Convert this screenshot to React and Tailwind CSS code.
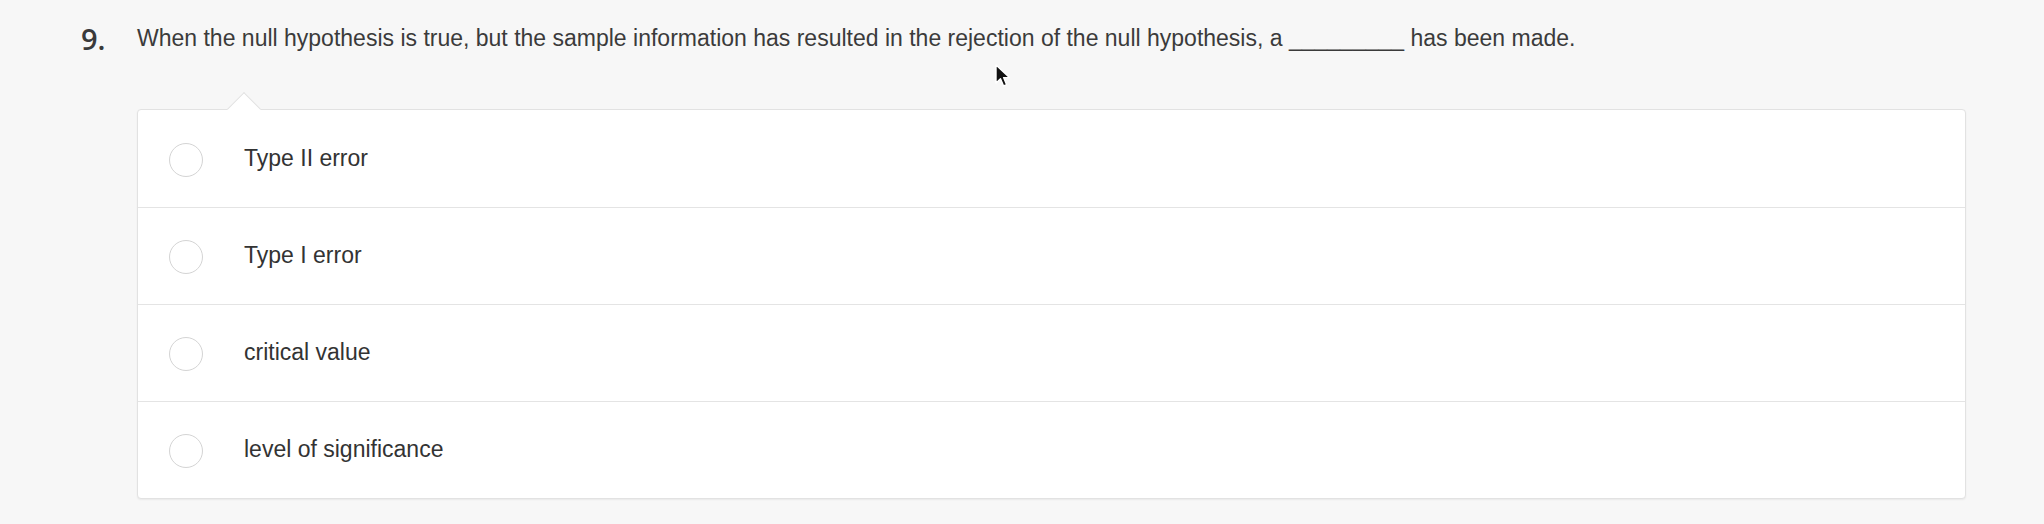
import React from 'react';

const options = ['Type II error', 'Type I error', 'critical value', 'level of significance'];

// mouse pointer captured in the screenshot
const Cursor = () => (
  <svg className="absolute left-[994px] top-[63px]" width="18" height="26" viewBox="0 0 18 26">
    <path d="M2 2 L2 20 L6.5 15.8 L9.6 23 L12.6 21.7 L9.6 14.6 L15.4 14.6 Z" fill="#111" stroke="#fff" strokeWidth="1.4" strokeLinejoin="round" />
  </svg>
);

const Radio = () => (
  <span className="block w-[34px] h-[34px] rounded-full border-[1.5px] border-[#d4d4d4] bg-white shrink-0" />
);

export default function App() {
  return (
    <div className="relative h-[524px] bg-[#f7f7f7] font-['Liberation_Sans',Arial,sans-serif] text-[#333]">
      <div className="flex items-start pt-[21px] pl-[81px]">
        <span className="w-[56px] pt-[3px] leading-none font-['Open_Sans',sans-serif] font-semibold text-[29px] text-[#3a3a3a]">9.</span>
        <p className="text-[23px] text-[#3b3b3b]">
          When the null hypothesis is true, but the sample information has resulted in the rejection of the null hypothesis, a _________ has been made.
        </p>
      </div>

      <div className="relative ml-[137px] mt-[53px] w-[1829px] bg-white border border-[#e2e2e2] rounded-[4px] shadow-[0_1px_2px_rgba(0,0,0,0.06)]">
        <span className="absolute left-[94px] -top-[13px] w-[24px] h-[24px] rotate-45 bg-white border-t border-l border-[#e2e2e2]" />
        {options.map((opt, i) => (
          <div
            key={opt}
            className={`flex items-center h-[97px] pl-[31px] ${i > 0 ? 'border-t border-[#e4e4e4]' : ''}`}
          >
            <div className="mt-[3px]"><Radio /></div>
            <span className="ml-[41px] text-[23px] text-[#333]">{opt}</span>
          </div>
        ))}
      </div>

      <Cursor />
    </div>
  );
}
